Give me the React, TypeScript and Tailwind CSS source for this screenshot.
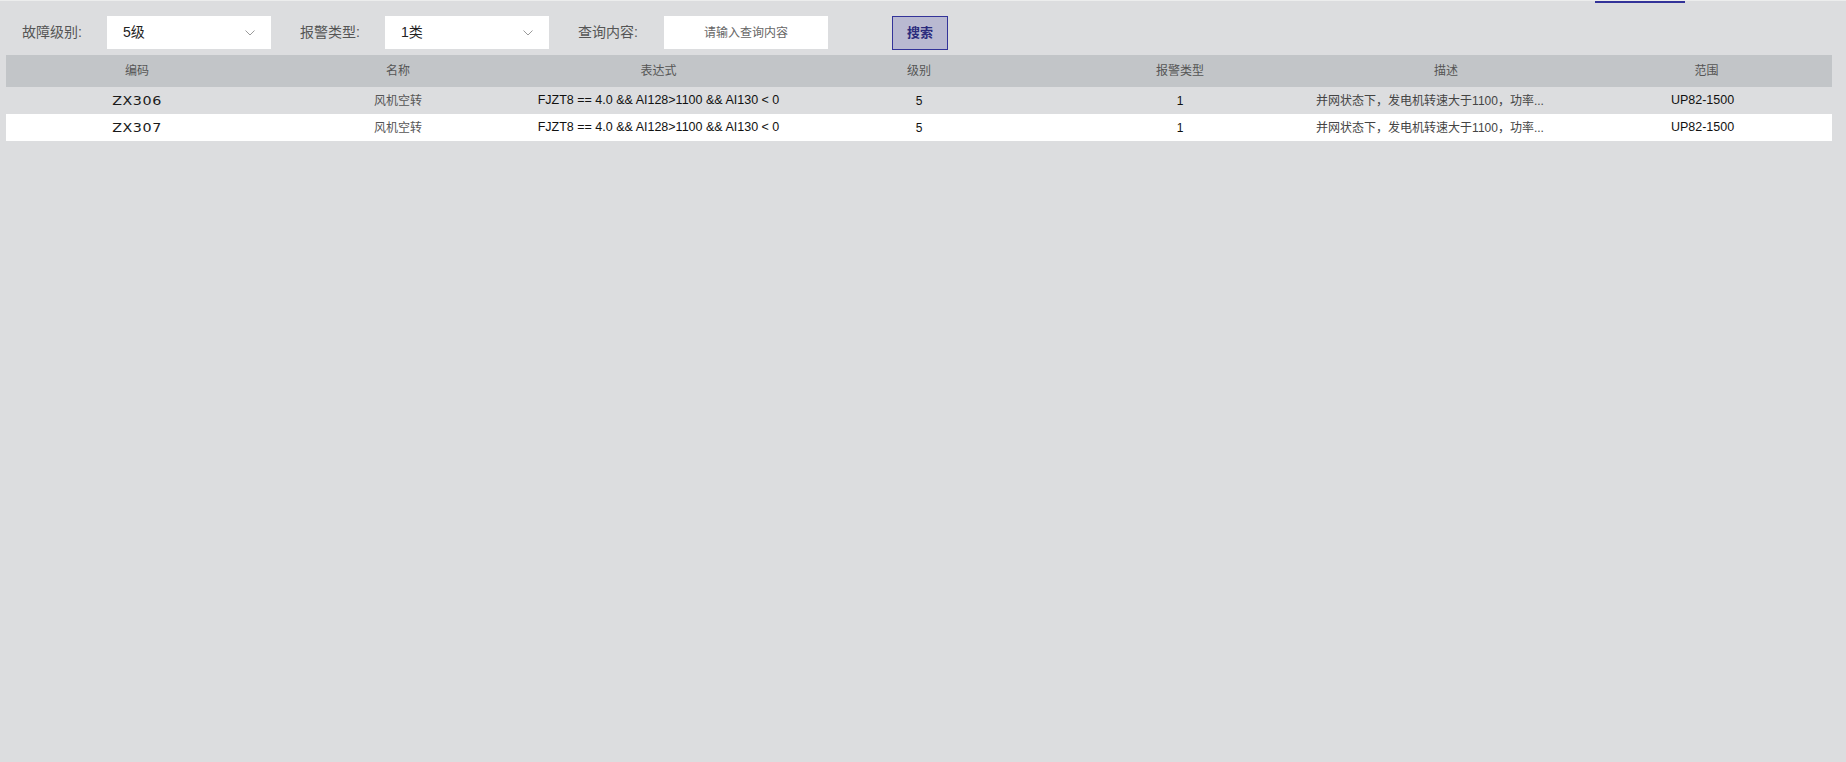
import React from 'react';

type Row = {
  code: string;
  name: string;
  expr: string;
  level: string;
  alarmType: string;
  desc: string;
  scope: string;
};

const ROWS: Row[] = [
  {
    code: 'ZX306',
    name: '风机空转',
    expr: 'FJZT8 == 4.0 && AI128>1100 && AI130 < 0',
    level: '5',
    alarmType: '1',
    desc: '并网状态下，发电机转速大于1100，功率...',
    scope: 'UP82-1500',
  },
  {
    code: 'ZX307',
    name: '风机空转',
    expr: 'FJZT8 == 4.0 && AI128>1100 && AI130 < 0',
    level: '5',
    alarmType: '1',
    desc: '并网状态下，发电机转速大于1100，功率...',
    scope: 'UP82-1500',
  },
];

const HEADERS = ['编码', '名称', '表达式', '级别', '报警类型', '描述', '范围'];

const GRID = 'grid grid-cols-[262px_260px_261px_260px_262px_270px_1fr]';

function Chevron() {
  return (
    <svg width="10" height="6" viewBox="0 0 10 6" fill="none" className="shrink-0">
      <path d="M0.5 0.5 L5 5 L9.5 0.5" stroke="#9a9a9a" strokeWidth="1" />
    </svg>
  );
}

function FakeSelect({ value }: { value: string }) {
  return (
    <div className="flex items-center justify-between w-[164px] h-[33px] bg-white pl-4 pr-4 text-[14px] text-[#222] cursor-pointer">
      <span>{value}</span>
      <Chevron />
    </div>
  );
}

export default function App() {
  return (
    <div
      className="relative w-full h-[762px] bg-[#dcdddf] border-t border-[#eceded] overflow-hidden"
      style={{ fontFamily: '"Liberation Sans", Arial, "Noto Sans CJK SC", sans-serif' }}
    >
      {/* leftover tab underline at top right */}
      <div className="absolute top-0 left-[1595px] w-[90px] h-[2px] bg-[#333399]" />

      {/* Filters */}
      <div className="flex items-center h-[54px] pt-[9px] pl-[22px] text-[14px] text-[#555]">
        <span className="w-[85px]">故障级别:</span>
        <FakeSelect value="5级" />
        <span className="ml-[29px] w-[85px]">报警类型:</span>
        <FakeSelect value="1类" />
        <span className="ml-[29px] w-[86px]">查询内容:</span>
        <div className="w-[164px] h-[33px] bg-white flex items-center justify-center text-[12px] text-[#666]">
          请输入查询内容
        </div>
        <button className="ml-[64px] w-[56px] h-[34px] bg-[#b9b9d1] border border-[#333399] text-[13px] font-bold text-[#2b2b7d]">
          搜索
        </button>
      </div>

      {/* Table */}
      <div className="ml-[6px] mr-[14px]">
        <div className={`${GRID} h-[32px] bg-[#c2c5c8] text-[12px] text-[#555] items-center`}>
          {HEADERS.map((h) => (
            <div key={h} className="text-center">
              {h}
            </div>
          ))}
        </div>
        {ROWS.map((r, i) => (
          <div
            key={r.code}
            className={`${GRID} h-[27px] items-center text-[12px] ${i % 2 === 1 ? 'bg-white' : 'bg-[#dcdddf]'}`}
          >
            <div
              className="text-center text-[13px] text-[#1a1a1a] tracking-[0.5px] scale-x-110"
              style={{ fontFamily: '"DejaVu Sans", sans-serif' }}
            >
              {r.code}
            </div>
            <div className="text-center text-[#555]">{r.name}</div>
            <div className="text-center text-[12.5px] text-[#111]">{r.expr}</div>
            <div className="text-center text-[#111]">{r.level}</div>
            <div className="text-center text-[#111]">{r.alarmType}</div>
            <div className="text-center text-[#444] pr-[32px] truncate">{r.desc}</div>
            <div className="text-center text-[12.5px] text-[#111] pr-[8px]">{r.scope}</div>
          </div>
        ))}
      </div>
    </div>
  );
}
